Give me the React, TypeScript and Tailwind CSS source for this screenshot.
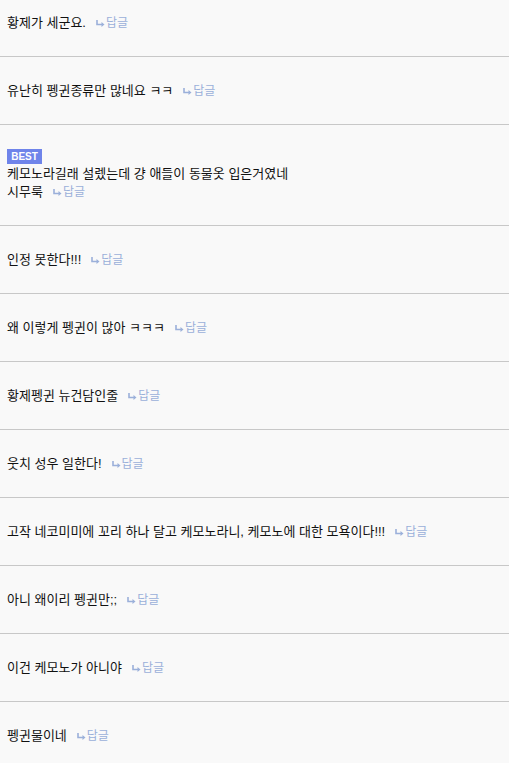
import React from 'react';

const comments = [
  { text: '황제가 세군요.' },
  { text: '유난히 펭귄종류만 많네요 ㅋㅋ' },
  { text: '케모노라길래 설렜는데 걍 애들이 동물옷 입은거였네\n시무룩', best: true },
  { text: '인정 못한다!!!' },
  { text: '왜 이렇게 펭귄이 많아 ㅋㅋㅋ' },
  { text: '황제펭귄 뉴건담인줄' },
  { text: '웃치 성우 일한다!' },
  { text: '고작 네코미미에 꼬리 하나 달고 케모노라니, 케모노에 대한 모욕이다!!!' },
  { text: '아니 왜이리 펭귄만;;' },
  { text: '이건 케모노가 아니야' },
  { text: '펭귄물이네' },
];

function ReplyArrow() {
  return (
    <svg width="9" height="7" viewBox="0 0 9 7" className="inline-block mr-[1px] align-[0px]">
      <path d="M1 0 V4.5 H6.5" fill="none" stroke="currentColor" strokeWidth="1.6" />
      <path d="M5.5 2 L8.5 4.5 L5.5 7 Z" fill="currentColor" />
    </svg>
  );
}

export default function App() {
  return (
    <div
      className="w-[509px] h-[763px] overflow-hidden bg-[#f9f9f9] text-[13px] text-[#111]"
      style={{ fontFamily: '"Liberation Sans", "Noto Sans CJK KR", sans-serif' }}
    >
      {comments.map((c, i) => (
        <div
          key={i}
          className={`px-[7px] pb-[24px] border-b border-[#c8c8c8] ${i === 0 ? 'pt-[14px]' : 'pt-[25px]'}`}
        >
          {c.best && (
            <div className="w-[35px] h-[15px] -mt-[1px] mb-[1px] bg-[#6f84ea] text-white text-[10px] font-bold leading-[15px] text-center">
              BEST
            </div>
          )}
          <p className="leading-[18px] whitespace-pre-line">
            {c.text}
            <span className="ml-[10px] text-[12px] text-[#9bb0da]">
              <ReplyArrow />
              답글
            </span>
          </p>
        </div>
      ))}
    </div>
  );
}
